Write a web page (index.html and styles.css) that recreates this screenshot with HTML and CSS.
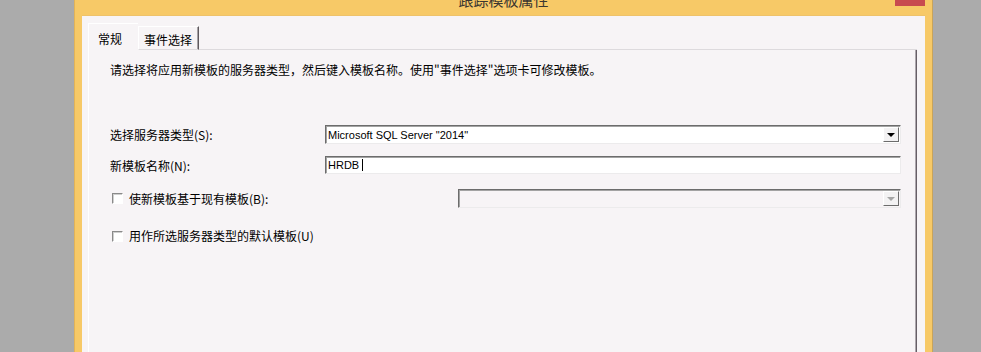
FILE: index.html
```html
<!DOCTYPE html>
<html lang="zh-CN">

<head>
    <meta charset="UTF-8">
    <title>跟踪模板属性</title>
    <link rel="stylesheet" href="styles.css">
</head>

<body>
    <div class="window">
        <div class="titlebar">
            <div class="title">跟踪模板属性</div>
            <div class="close-btn"></div>
        </div>

        <div class="dialog">
            <div class="tabs">
                <div class="tab active">常规</div>
                <div class="tab">事件选择</div>
                <div class="tab-filler"></div>
            </div>

            <div class="panel">
                <div class="desc">请选择将应用新模板的服务器类型，然后键入模板名称。使用"事件选择"选项卡可修改模板。</div>

                <div class="row row-server">
                    <label class="label">选择服务器类型(S):</label>
                    <div class="combo wide">
                        <span class="field-text">Microsoft SQL Server "2014"</span>
                        <span class="drop-btn"><span class="arrow"></span></span>
                    </div>
                </div>

                <div class="row row-name">
                    <label class="label">新模板名称(N):</label>
                    <div class="textbox wide">
                        <span class="field-text">HRDB </span><span class="caret"></span>
                    </div>
                </div>

                <div class="row row-base">
                    <div class="check-item">
                        <span class="checkbox"></span>
                        <span>使新模板基于现有模板(B):</span>
                    </div>
                    <div class="combo disabled">
                        <span class="field-text"></span>
                        <span class="drop-btn"><span class="arrow"></span></span>
                    </div>
                </div>

                <div class="row row-default">
                    <div class="check-item">
                        <span class="checkbox"></span>
                        <span>用作所选服务器类型的默认模板(U)</span>
                    </div>
                </div>
            </div>
        </div>
    </div>
</body>

</html>
```

FILE: styles.css
```css
body {
    margin: 0;
    height: 352px;
    overflow: hidden;
    background: #ababab;
    font-family: "Liberation Sans", "Noto Sans CJK SC", sans-serif;
    font-size: 12px;
    color: #000;
}

.window {
    margin-left: 74px;
    width: 859px;
    height: 352px;
    box-sizing: border-box;
    background: #f7c967;
    border-left: 1px solid #e2b358;
    border-right: 1px solid #c9a45a;
    padding: 0 7px;
    display: flex;
    flex-direction: column;
}

/* title bar, cut off at the top of the shot */
.titlebar {
    height: 15px;
    overflow: hidden;
    display: grid;
    grid-template-columns: 1fr auto 1fr;
    flex-shrink: 0;
}

.title {
    grid-column: 2;
    font-family: "Noto Sans CJK SC", sans-serif;
    font-size: 15px;
    line-height: 15px;
    margin-top: -8px;
    color: #3a3630;
}

.close-btn {
    grid-column: 3;
    justify-self: end;
    width: 30px;
    height: 6px;
    background: #c84a4f;
}

.dialog {
    flex: 1;
    background: #f7f4f6;
    border-top: 1px solid #eec26a;
    padding: 7px 8px 0 6px;
    display: flex;
    flex-direction: column;
}

/* tabs */
.tabs {
    display: flex;
    align-items: flex-end;
    height: 27px;
    flex-shrink: 0;
}

.tab {
    font-family: "Noto Sans CJK SC", sans-serif;
    font-size: 12px;
    line-height: 16px;
    box-sizing: border-box;
}

.tab.active {
    width: 50px;
    height: 27px;
    padding: 7px 0 0 9px;
    border-left: 1px solid #fff;
    border-top: 1px solid #fff;
}

.tab:not(.active) {
    width: 61px;
    height: 24px;
    padding: 5px 0 0 5px;
    border-left: 1px solid #fff;
    border-top: 1px solid #fff;
    border-right: 1px solid #5f5a5f;
    box-shadow: inset -1px 0 #a6a2a6;
    border-bottom: 1px solid #dddadd;
}

.tab-filler {
    flex: 1;
    border-bottom: 1px solid #dddadd;
}

/* tab page */
.panel {
    flex: 1;
    border-left: 1px solid #fff;
    border-right: 1px solid #665e66;
    box-shadow: inset -1px 0 #aca6ac;
    padding: 12px 15px 0 21px;
    font-family: "Noto Sans CJK SC", sans-serif;
}

.desc {
    line-height: 16px;
}

.row {
    display: grid;
    grid-template-columns: 215px 133px 1fr;
    align-items: center;
}

.row-server {
    margin-top: 47px;
}

.row-name {
    margin-top: 12px;
}

.row-base {
    margin-top: 15px;
}

.row-default {
    margin-top: 20px;
    line-height: 16px;
}

.label {
    grid-column: 1;
}

.wide {
    grid-column: 2 / 4;
}

.row-base .combo {
    grid-column: 3;
}

.row-default .check-item {
    grid-column: 1 / 4;
}

/* fields */
.combo,
.textbox {
    height: 19px;
    box-sizing: border-box;
    background: #fff;
    border-top: 1px solid #6c6c6c;
    border-left: 1px solid #6c6c6c;
    border-bottom: 1px solid #ecebec;
    border-right: 1px solid #ecebec;
    box-shadow: inset 1px 1px #a3a3a3;
    display: flex;
    align-items: center;
    font-family: "Liberation Sans", sans-serif;
    font-size: 11px;
}

.textbox {
    height: 18px;
}

.combo.disabled {
    background: #f7f4f6;
}

.field-text {
    flex: 1;
    padding-left: 2px;
    white-space: pre;
}

.textbox .field-text {
    flex: none;
}

.caret {
    width: 1px;
    height: 12px;
    background: #000;
}

.drop-btn {
    width: 16px;
    height: 15px;
    margin-right: 1px;
    box-sizing: border-box;
    background: #f3f2f3;
    border-top: 1px solid #fff;
    border-left: 1px solid #fff;
    border-right: 1px solid #6c6c6c;
    border-bottom: 1px solid #6c6c6c;
    display: flex;
    justify-content: center;
    align-items: center;
}

.arrow {
    width: 0;
    height: 0;
    border-left: 4px solid transparent;
    border-right: 4px solid transparent;
    border-top: 4px solid #000;
}

.disabled .arrow {
    border-top-color: #a5a5a5;
}

/* checkboxes */
.check-item {
    display: flex;
    align-items: center;
    gap: 6px;
}

.checkbox {
    width: 11px;
    height: 11px;
    margin-left: 2px;
    box-sizing: border-box;
    background: #fff;
    border-top: 1px solid #8a8a8a;
    border-left: 1px solid #8a8a8a;
    border-right: 1px solid #fff;
    border-bottom: 1px solid #fff;
    box-shadow: inset 1px 1px #cfcfcf;
}
```
